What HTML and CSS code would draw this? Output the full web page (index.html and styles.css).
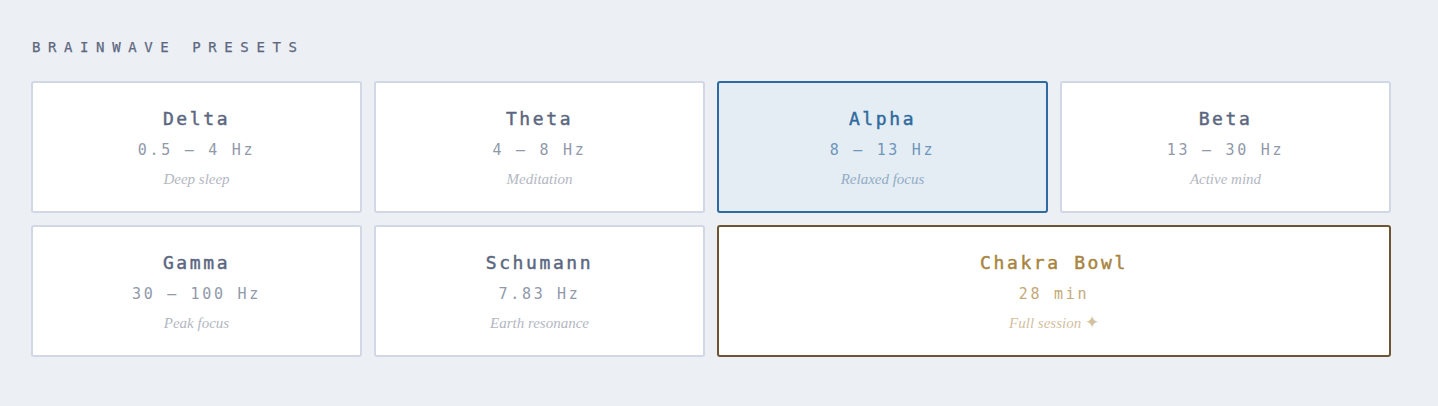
FILE: index.html
```html
<!DOCTYPE html>
<html>
<head>
<meta charset="utf-8">
<link rel="stylesheet" href="styles.css">
</head>
<body>
<section class="presets">
  <h2 class="heading">BRAINWAVE PRESETS</h2>
  <div class="grid">
    <div class="card"><div class="name">Delta</div><div class="freq">0.5 – 4 Hz</div><div class="desc">Deep sleep</div></div>
    <div class="card"><div class="name">Theta</div><div class="freq">4 – 8 Hz</div><div class="desc">Meditation</div></div>
    <div class="card active"><div class="name">Alpha</div><div class="freq">8 – 13 Hz</div><div class="desc">Relaxed focus</div></div>
    <div class="card"><div class="name">Beta</div><div class="freq">13 – 30 Hz</div><div class="desc">Active mind</div></div>
    <div class="card"><div class="name">Gamma</div><div class="freq">30 – 100 Hz</div><div class="desc">Peak focus</div></div>
    <div class="card"><div class="name">Schumann</div><div class="freq">7.83 Hz</div><div class="desc">Earth resonance</div></div>
    <div class="card bowl"><div class="name">Chakra Bowl</div><div class="freq">28 min</div><div class="desc">Full session <span class="star">✦</span></div></div>
  </div>
</section>
</body>
</html>
```
FILE: styles.css
```css
html, body {
  margin: 0;
  padding: 0;
  background: #eceff4;
}
.presets {
  padding: 36px 0 0 31px;
}
.heading {
  margin: 0 0 23px 1px;
  font-family: "DejaVu Sans Mono", monospace;
  font-weight: normal;
  font-size: 14px;
  letter-spacing: 7.6px;
  color: #5d6880;
  -webkit-text-stroke: 0.25px currentColor;
  line-height: 22px;
}
.grid {
  width: 1360px;
  display: grid;
  grid-template-columns: repeat(4, 1fr);
  gap: 12px;
}
.card {
  box-sizing: border-box;
  height: 132px;
  background: #ffffff;
  border: 2px solid #d1d7e5;
  border-radius: 3px;
  display: flex;
  flex-direction: column;
  align-items: center;
  padding-top: 23px;
}
.name {
  font-family: "DejaVu Sans Mono", monospace;
  font-weight: normal;
  font-size: 18px;
  letter-spacing: 2.6px;
  line-height: 26px;
  color: #5b6780;
  -webkit-text-stroke: 0.45px currentColor;
}
.freq {
  margin-top: 8px;
  font-family: "DejaVu Sans Mono", monospace;
  font-size: 15px;
  letter-spacing: 2.7px;
  line-height: 20px;
  color: #9099aa;
}
.desc {
  margin-top: 9px;
  font-family: "Liberation Serif", serif;
  font-style: italic;
  font-size: 15px;
  line-height: 20px;
  color: #b3b7c2;
}
.card.active {
  background: #e4edf4;
  border-color: #2f6aa0;
}
.card.active .name { color: #2f6a9e; }
.card.active .freq { color: #6f95bb; }
.card.active .desc { color: #93acc4; }
.card.bowl {
  grid-column: span 2;
  border-color: #6b5532;
}
.card.bowl .name { color: #a8843f; }
.card.bowl .freq { color: #c4a878; }
.card.bowl .desc { color: #d3c19f; }
.star {
  font-style: normal;
  font-size: 17px;
}
```
